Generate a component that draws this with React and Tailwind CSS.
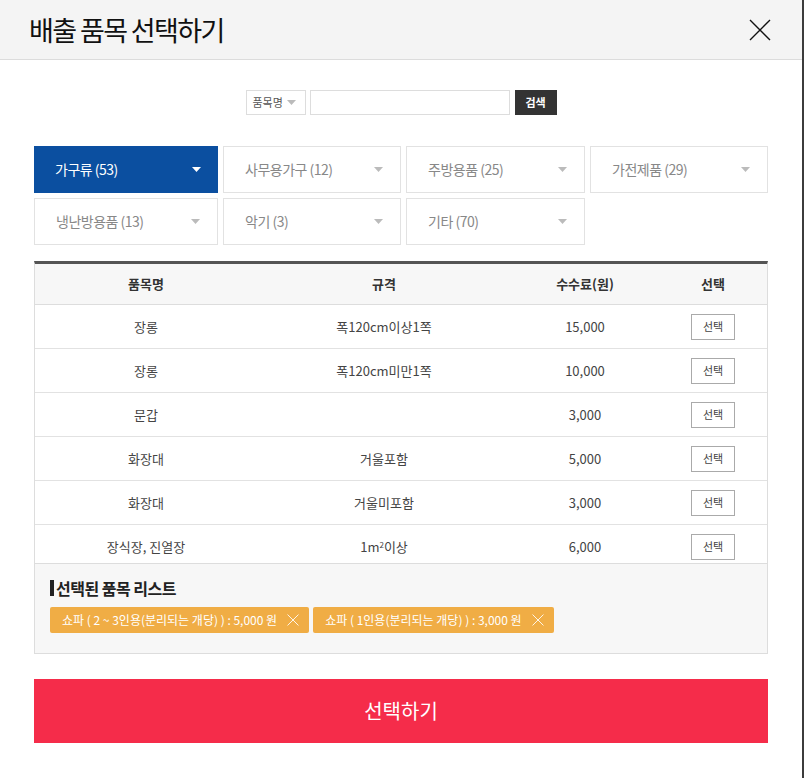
import React, { useState } from 'react';

const categories = [
  { name: '가구류', count: 53 },
  { name: '사무용가구', count: 12 },
  { name: '주방용품', count: 25 },
  { name: '가전제품', count: 29 },
  { name: '냉난방용품', count: 13 },
  { name: '악기', count: 3 },
  { name: '기타', count: 70 },
];

const items = [
  { name: '장롱', spec: '폭120cm이상1쪽', fee: '15,000' },
  { name: '장롱', spec: '폭120cm미만1쪽', fee: '10,000' },
  { name: '문갑', spec: '', fee: '3,000' },
  { name: '화장대', spec: '거울포함', fee: '5,000' },
  { name: '화장대', spec: '거울미포함', fee: '3,000' },
  { name: '장식장, 진열장', spec: <>1m<sup className="text-[8px]">2</sup>이상</>, fee: '6,000' },
];

const selected = [
  '쇼파 ( 2 ~ 3인용(분리되는 개당) ) : 5,000 원',
  '쇼파 ( 1인용(분리되는 개당) ) : 3,000 원',
];

const Caret = ({ className }) => (
  <svg width="9" height="5" viewBox="0 0 9 5" className={className}>
    <path d="M0 0h9L4.5 5z" fill="currentColor" />
  </svg>
);

const CloseX = ({ size = 22, stroke = 1.4, className }) => (
  <svg width={size} height={size} viewBox="0 0 22 22" className={className}>
    <path d="M1 1L21 21M21 1L1 21" stroke="currentColor" strokeWidth={stroke} fill="none" />
  </svg>
);

const App = () => {
  const [active, setActive] = useState(0);

  return (
    <div
      className="w-[804px] h-[778px] bg-white border-r-2 border-[#3c3c3c] overflow-hidden text-[#333]"
      style={{ fontFamily: '"Noto Sans CJK KR", "Noto Sans", sans-serif' }}
    >
      {/* Header */}
      <div className="h-[60px] bg-[#f4f4f4] border-b border-[#dcdcdc] flex items-center justify-between pl-[29px] pr-[31px]">
        <h1 className="text-[27px] tracking-[-1.6px] text-[#111] leading-none">배출 품목 선택하기</h1>
        <CloseX className="text-[#111]" />
      </div>

      {/* Search */}
      <div className="flex justify-center items-center gap-[4px] mt-[30px]">
        <div className="w-[60px] h-[25px] border border-[#ddd] flex items-center pl-[6px] gap-[4px] text-[11px] text-[#555]">
          품목명 <Caret className="text-[#bbb]" />
        </div>
        <div className="w-[200px] h-[25px] border border-[#ddd]" />
        <button className="w-[42px] h-[25px] ml-[1px] bg-[#333] text-white text-[11px] font-bold">검색</button>
      </div>

      {/* Categories */}
      <div className="grid grid-cols-[184px_178px_179px_178px] gap-[5px] mx-[34px] mt-[31px]">
        {categories.map((c, i) => (
          <button
            key={c.name}
            onClick={() => setActive(i)}
            className={
              i === active
                ? 'h-[47px] bg-[#0b4fa0] text-white flex items-center justify-between pl-[21px] pr-[17px] text-[14px] tracking-[-0.5px]'
                : 'h-[47px] border border-[#e2e2e2] text-[#888] flex items-center justify-between pl-[21px] pr-[17px] text-[14px] tracking-[-0.5px]'
            }
          >
            <span>{c.name} ({c.count})</span>
            <Caret className={i === active ? 'text-white' : 'text-[#bbb]'} />
          </button>
        ))}
      </div>

      {/* Table */}
      <div className="mx-[34px] mt-[16px] border-t-[3px] border-[#555] border-x border-x-[#ddd]">
        <div className="grid grid-cols-[222px_254px_148px_1fr] h-[41px] bg-[#f7f7f7] border-b border-[#ddd] items-center text-[13px] font-bold text-[#333]">
          <div className="text-center">품목명</div>
          <div className="text-center">규격</div>
          <div className="text-center">수수료(원)</div>
          <div className="text-center">선택</div>
        </div>
        <div className="h-[258px] overflow-hidden">
          {items.map((it, i) => (
            <div key={i} className="grid grid-cols-[222px_254px_148px_1fr] h-[44px] border-b border-[#e2e2e2] items-center text-[13px] text-[#444]">
              <div className="text-center">{it.name}</div>
              <div className="text-center">{it.spec}</div>
              <div className="text-center">{it.fee}</div>
              <div className="flex justify-center">
                <button className="w-[44px] h-[26px] border border-[#aaa] text-[11px] text-[#444]">선택</button>
              </div>
            </div>
          ))}
        </div>

        {/* Selected list */}
        <div className="h-[91px] bg-[#f7f7f7] border-y border-[#ddd] px-[15px] pt-[16px]">
          <div className="flex items-center gap-[2px] text-[16px] font-bold text-[#222] leading-none tracking-[-0.5px]">
            <span className="w-[4px] h-[16px] bg-[#222]" />
            선택된 품목 리스트
          </div>
          <div className="flex gap-[4px] mt-[11px]">
            {selected.map((s) => (
              <div key={s} className="h-[26px] bg-[#f0ad45] rounded-[2px] text-white text-[12px] flex items-center pl-[12px] pr-[10px] gap-[10px]">
                {s}
                <CloseX size={12} stroke={1.6} className="text-white" />
              </div>
            ))}
          </div>
        </div>
      </div>

      {/* Submit */}
      <button className="block w-[734px] h-[64px] mx-[34px] mt-[25px] bg-[#f52c4a] text-white text-[20px]">선택하기</button>
    </div>
  );
};

export default App;
